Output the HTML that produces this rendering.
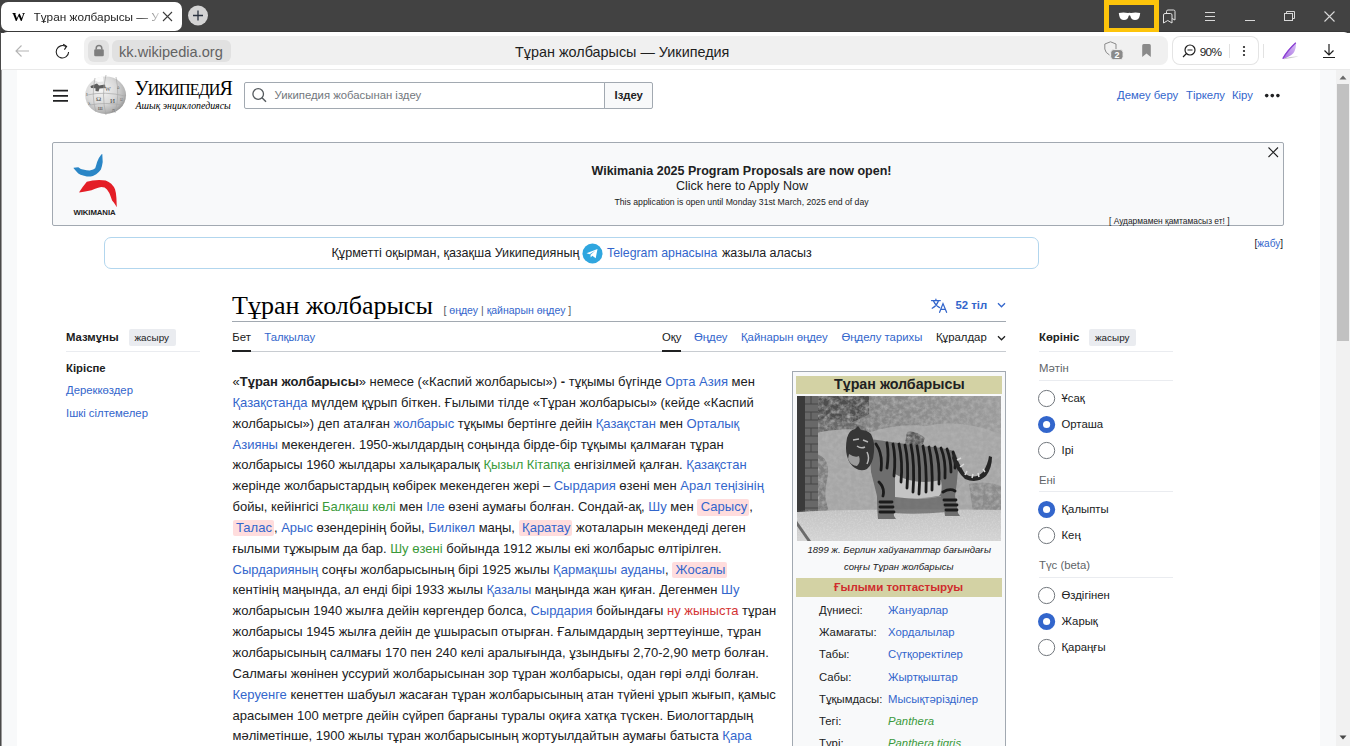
<!DOCTYPE html>
<html><head><meta charset="utf-8"><title>Тұран жолбарысы — Уикипедия</title>
<style>
html,body{margin:0;padding:0;width:1350px;height:746px;overflow:hidden;background:#fff;}
body{position:relative;font-family:"Liberation Sans",sans-serif;}
.r{position:absolute;display:block;}
.t{position:absolute;white-space:nowrap;}
.a{color:#3366cc;}
.g{color:#3a9a3a;}
.rd{color:#d33333;}
.pk{color:#3366cc;background:#fdd;border-radius:2px;padding:0 2px 1.5px 3.5px;}
b{font-weight:bold;}
</style></head><body>
<div class="r" style="left:0px;top:0px;width:1350px;height:33px;background:#424242;"></div><div class="r" style="left:0px;top:31px;width:1350px;height:1px;background:#393939;"></div><div class="r" style="left:1px;top:2px;width:181px;height:29px;background:#ffffff;border-radius:7px;"></div><div class="t" style="left:12.2px;top:10.39px;font-size:12.6px;line-height:15.12px;color:#000;font-weight:bold;font-style:normal;font-family:'Liberation Serif', serif;display:inline-block;transform:scaleX(1.05);transform-origin:0 0;">W</div><div class="t" style="left:33.5px;top:8px;width:125px;height:19px;overflow:hidden;font-size:11.8px;line-height:19px;color:#1e1e1e;white-space:nowrap;-webkit-mask-image:linear-gradient(90deg,#000 0,#000 86%,rgba(0,0,0,0.2) 100%);">Тұран жолбарысы — Уикипедия</div><svg class="r" style="left:162px;top:11px;" width="11" height="11" viewBox="0 0 11 11"><path d="M1 1L10 10M10 1L1 10" stroke="#3c3c3c" stroke-width="1.1"/></svg><svg class="r" style="left:187px;top:5px;" width="22" height="22" viewBox="0 0 22 22"><circle cx="11" cy="10.5" r="10" fill="#d4d4d4"/><path d="M11 5.5v10M6 10.5h10" stroke="#2a3340" stroke-width="1.3"/></svg><div class="r" style="left:1104px;top:0px;width:55px;height:32px;background:#fdc40b;"></div><div class="r" style="left:1109px;top:5px;width:45px;height:22.5px;background:#424242;"></div><svg class="r" style="left:1118px;top:11px;" width="23" height="10" viewBox="0 0 23 10"><path d="M0.8 2Q5.5 0.8 10 2Q11.5 1.4 13 2Q17.5 0.8 22.2 2L21.8 4.5Q21 9 17 9Q13 9 12.3 4.8Q11.5 3.6 10.7 4.8Q10 9 6 9Q2 9 1.2 4.5Z" fill="#fff"/></svg><svg class="r" style="left:1162px;top:9px;" width="15" height="16" viewBox="0 0 15 16"><path d="M4.5 4.5V2.5Q4.5 1 6 1H11.5Q13 1 13 2.5V11L10 9.5" fill="none" stroke="#e2e2e2" stroke-width="1"/><path d="M1.5 14V6Q1.5 4.5 3 4.5H8.5Q10 4.5 10 6V14L5.75 11.5Z" fill="none" stroke="#e2e2e2" stroke-width="1"/></svg><svg class="r" style="left:1204px;top:11px;" width="12" height="11" viewBox="0 0 12 11"><path d="M1 1.5H11M1 5.5H11M1 9.5H11" stroke="#d8d8d8" stroke-width="1.1"/></svg><div class="r" style="left:1245px;top:20px;width:10px;height:1px;background:#d8d8d8;"></div><svg class="r" style="left:1283px;top:10px;" width="13" height="12" viewBox="0 0 13 12"><path d="M3.5 3.5V1.5H11.5V8.5H9.5" fill="none" stroke="#d8d8d8" stroke-width="1"/><rect x="1.5" y="3.5" width="8" height="7" fill="none" stroke="#d8d8d8" stroke-width="1"/></svg><svg class="r" style="left:1324px;top:11px;" width="11" height="11" viewBox="0 0 11 11"><path d="M0.5 0.5L10.5 10.5M10.5 0.5L0.5 10.5" stroke="#d8d8d8" stroke-width="1.1"/></svg><div class="r" style="left:1px;top:32px;width:1349px;height:37px;background:#ffffff;border-radius:6px 6px 0 0;"></div><div class="r" style="left:1px;top:69px;width:1349px;height:1px;background:#e9e9e9;"></div><svg class="r" style="left:14px;top:43px;" width="16" height="16" viewBox="0 0 16 16"><path d="M2 8H15M7.5 2.5L2 8L7.5 13.5" fill="none" stroke="#b4b4b4" stroke-width="1.1"/></svg><svg class="r" style="left:54px;top:42px;" width="18" height="18" viewBox="0 0 18 18"><path d="M14.6 10A6.2 6.2 0 1 1 11.8 4.6" fill="none" stroke="#1e1e1e" stroke-width="1.1"/><path d="M9.2 2.2L12.6 4.4L10.4 7.6" fill="none" stroke="#1e1e1e" stroke-width="1.1"/></svg><div class="r" style="left:84px;top:36px;width:1084px;height:29px;background:#f0f0f0;border-radius:8px;"></div><div class="r" style="left:88px;top:40px;width:21px;height:22px;background:#e1e1e1;border-radius:6px;"></div><svg class="r" style="left:92px;top:44px;" width="14" height="14" viewBox="0 0 14 14"><path d="M4.2 5.5V4.2A2.8 2.8 0 0 1 9.8 4.2V5.5" fill="none" stroke="#7e7e7e" stroke-width="1.5"/><rect x="2.2" y="5.3" width="9.6" height="7" rx="1.3" fill="#7e7e7e"/></svg><div class="r" style="left:112px;top:40px;width:119px;height:22px;background:#e1e1e1;border-radius:6px;"></div><div class="t" style="left:119px;top:43.88px;font-size:14.6px;line-height:17.52px;color:#636363;font-weight:normal;font-style:normal;font-family:'Liberation Sans', sans-serif;">kk.wikipedia.org</div><div class="t" style="left:515px;top:44.07px;font-size:14.4px;line-height:17.28px;color:#1e1e1e;font-weight:normal;font-style:normal;font-family:'Liberation Sans', sans-serif;">Тұран жолбарысы — Уикипедия</div><svg class="r" style="left:1103px;top:40px;" width="22" height="21" viewBox="0 0 22 21"><path d="M7.5 1.8L13 4V9.5M7.5 1.8L1.8 4V9Q2.3 12.8 6.5 15" fill="none" stroke="#8a8a8a" stroke-width="1"/><rect x="7.7" y="9.6" width="12.4" height="10.1" rx="3" fill="#8a8a8a" stroke="#f0f0f0" stroke-width="1"/><text x="13.9" y="18.3" font-size="9" font-family="Liberation Sans" font-weight="bold" fill="#fff" text-anchor="middle">2</text></svg><svg class="r" style="left:1141px;top:43px;" width="12" height="15" viewBox="0 0 12 15"><path d="M1.2 2.5Q1.2 1 2.7 1H8.3Q9.8 1 9.8 2.5V14L5.5 10.6L1.2 14Z" fill="#8a8a8a"/></svg><div class="r" style="left:1172px;top:36px;width:87px;height:29px;background:#ffffff;border-radius:8px;box-shadow:inset 0 0 0 1px #e4e4e4;"></div><svg class="r" style="left:1181px;top:44px;" width="16" height="14" viewBox="0 0 16 14"><circle cx="9" cy="6" r="5" fill="none" stroke="#1e1e1e" stroke-width="1.2"/><path d="M6.5 6H11.5M5.5 9.5L2 13" stroke="#1e1e1e" stroke-width="1.2"/></svg><div class="t" style="left:1199.8px;top:44.83px;font-size:11.8px;line-height:14.16px;color:#1e1e1e;font-weight:normal;font-style:normal;font-family:'Liberation Sans', sans-serif;letter-spacing:-0.75px;">90%</div><div class="r" style="left:1229px;top:44px;width:1px;height:14px;background:#e2e2e2;"></div><svg class="r" style="left:1241px;top:45px;" width="6" height="12" viewBox="0 0 6 12"><circle cx="3" cy="2" r="1.1" fill="#1e1e1e"/><circle cx="3" cy="6" r="1.1" fill="#1e1e1e"/><circle cx="3" cy="10" r="1.1" fill="#1e1e1e"/></svg><div class="r" style="left:1263px;top:44px;width:1px;height:14px;background:#e2e2e2;"></div><svg class="r" style="left:1281px;top:41px;" width="19" height="19" viewBox="0 0 19 19"><defs><linearGradient id="fg" x1="0" y1="1" x2="1" y2="0"><stop offset="0" stop-color="#a467e0"/><stop offset="1" stop-color="#d9c2f5"/></linearGradient></defs><path d="M3 17.6Q10 15.2 17.5 15.6Q10 17.3 3 18.2Z" fill="#c9c9c9"/><path d="M1.5 18Q5 9.5 15 1.5Q15.2 8 12.5 12Q8.5 16.2 1.5 18Z" fill="url(#fg)"/><path d="M1.8 17.6Q6.5 9.5 14.8 1.8" fill="none" stroke="#8a3fd2" stroke-width="1.3"/></svg><svg class="r" style="left:1322px;top:43px;" width="14" height="16" viewBox="0 0 14 16"><path d="M7 1V12M2.5 7.5L7 12L11.5 7.5M1 14.5H13" fill="none" stroke="#1e1e1e" stroke-width="1.2"/></svg><div class="r" style="left:0px;top:32px;width:1px;height:714px;background:#4a4a4a;"></div><div class="r" style="left:1px;top:70px;width:1px;height:676px;background:#9a9a9a;"></div><div class="r" style="left:2px;top:70px;width:15px;height:676px;background:#f8f9fa;"></div><div class="r" style="left:1320px;top:70px;width:16px;height:676px;background:#f8f9fa;"></div><div class="r" style="left:1336px;top:70px;width:14px;height:676px;background:#f1f1f1;"></div><div class="r" style="left:1337px;top:84px;width:12px;height:257px;background:#c1c1c1;"></div><svg class="r" style="left:1338px;top:73px;" width="10" height="8" viewBox="0 0 10 8"><path d="M1.5 6.5L5 2.5L8.5 6.5Z" fill="#6a6a6a"/></svg><svg class="r" style="left:1338px;top:734px;" width="10" height="8" viewBox="0 0 10 8"><path d="M1.5 1.5L5 5.5L8.5 1.5Z" fill="#474747"/></svg>
<svg class="r" style="left:53px;top:88px;" width="16" height="14" viewBox="0 0 16 14"><path d="M0 2.7H15M0 7.9H15M0 12.8H15" stroke="#202122" stroke-width="1.8"/></svg><svg class="r" style="left:84px;top:74px;" width="44" height="42" viewBox="0 0 44 42"><defs><radialGradient id="gg" cx="0.38" cy="0.36" r="0.7"><stop offset="0" stop-color="#f6f6f6"/><stop offset="0.55" stop-color="#d9d9d9"/><stop offset="0.85" stop-color="#b4b4b4"/><stop offset="1" stop-color="#8e8e8e"/></radialGradient></defs><ellipse cx="21.6" cy="21.2" rx="20.4" ry="18.8" fill="url(#gg)"/><path d="M9 5.5Q14 3 19 2.3L19.5 7.5L14 8Z" fill="#fff" opacity="0.9"/><path d="M6.5 12L13 9.5L15 11.5L21 10.5L21.5 14L15.5 14.5L14.5 17.5L11.5 17L11.5 14.2L7 14Z" fill="#5e5e5e"/><path d="M3 21Q21 17 41 22M6 31Q21 28 39 31M22 1Q17 21 22 41M11 4Q7 22 12 38M32 3Q36 21 31 39" fill="none" stroke="#a9a9a9" stroke-width="0.7"/><text x="12" y="27" font-size="7" font-family='Liberation Serif' fill="#4a4a4a">Ω</text><text x="21" y="17" font-size="6" font-family='Liberation Serif' fill="#555">W</text><text x="26" y="29" font-size="7" font-family='Liberation Serif' fill="#4a4a4a">И</text><text x="14" y="36" font-size="6" font-family='Liberation Serif' fill="#555">ш</text><text x="33" y="15" font-size="5" font-family='Liberation Serif' fill="#666">ა</text><text x="2" y="22" font-size="5" font-family='Liberation Serif' fill="#666">I</text><text x="28" y="38" font-size="5" font-family='Liberation Serif' fill="#666">ה</text><text x="36" y="27" font-size="5" font-family='Liberation Serif' fill="#777">ע</text><text x="4" y="31" font-size="5" font-family='Liberation Serif' fill="#666">λ</text></svg><div class="t" style="left:134.5px;top:77.5px;font-family:'Liberation Serif',serif;font-size:16px;line-height:20px;color:#000;letter-spacing:-0.85px;"><span style="font-size:20px">У</span>ИКИПЕДИ<span style="font-size:20px">Я</span></div><div class="t" style="left:135.5px;top:100.22px;font-size:9.9px;line-height:11.88px;color:#000;font-weight:normal;font-style:italic;font-family:'Liberation Serif', serif;">Ашық энциклопедиясы</div><div class="r" style="left:244px;top:82px;width:408px;height:27px;background:#fff;box-sizing:border-box;border:1px solid #a2a9b1;border-radius:2px;"></div><div class="r" style="left:604px;top:82px;width:48.5px;height:27px;background:#f8f9fa;box-sizing:border-box;border:1px solid #a2a9b1;border-radius:0 2px 2px 0;"></div><svg class="r" style="left:251px;top:87px;" width="16" height="17" viewBox="0 0 16 17"><circle cx="7.2" cy="7" r="5.3" fill="none" stroke="#54595d" stroke-width="1.3"/><path d="M11 10.8L15 14.8" stroke="#54595d" stroke-width="1.5"/></svg><div class="t" style="left:274.5px;top:88.97px;font-size:11.34px;line-height:13.61px;color:#72777d;font-weight:normal;font-style:normal;font-family:'Liberation Sans', sans-serif;">Уикипедия жобасынан іздеу</div><div class="t" style="left:614.5px;top:88.97px;font-size:11.34px;line-height:13.61px;color:#202122;font-weight:bold;font-style:normal;font-family:'Liberation Sans', sans-serif;">Іздеу</div><div class="t" style="left:1117px;top:88.67px;font-size:11.34px;line-height:13.61px;color:#3366cc;font-weight:normal;font-style:normal;font-family:'Liberation Sans', sans-serif;">Демеу беру</div><div class="t" style="left:1186px;top:88.67px;font-size:11.34px;line-height:13.61px;color:#3366cc;font-weight:normal;font-style:normal;font-family:'Liberation Sans', sans-serif;">Тіркелу</div><div class="t" style="left:1232px;top:88.67px;font-size:11.34px;line-height:13.61px;color:#3366cc;font-weight:normal;font-style:normal;font-family:'Liberation Sans', sans-serif;">Кіру</div><svg class="r" style="left:1264px;top:92px;" width="17" height="7" viewBox="0 0 17 7"><circle cx="2.7" cy="3.6" r="1.8" fill="#202122"/><circle cx="8.3" cy="3.6" r="1.8" fill="#202122"/><circle cx="13.9" cy="3.6" r="1.8" fill="#202122"/></svg><div class="r" style="left:52px;top:142px;width:1232px;height:84px;background:#f8f9fa;box-sizing:border-box;border:1px solid #a2a9b1;border-radius:2px;"></div><svg class="r" style="left:70px;top:150px;" width="50" height="60" viewBox="0 0 50 60"><path d="M3.6 17.7L8.3 17.2Q11 19.3 13 19.6Q17 20.5 19.6 20.5Q24 19.5 25.2 18.2Q26.5 14.5 27.1 12.1Q28.5 8 31.3 4.6L32.3 4.1L32.7 12Q32 17 30.9 19.6Q28.5 23 26.2 24.3Q22 26.8 20.5 26.6Q16.5 26.5 14 25.7Q10 24.5 8.3 23.4Q5.5 20.5 3.6 18.2Z" fill="#2a86c6"/><path d="M9.3 42.1Q12 37.5 16.8 31.8Q21 30.5 22.4 30.4Q26 29.9 29 29.9Q33 30 35.6 30.4Q39 31.5 41.2 33.7Q44 36.5 45 39.3Q46.2 43 46.4 47.8L46.8 57.2Q43.5 52 42.1 50.6Q40.5 46 39.3 43.1Q37 38.5 34.6 37.4Q31 36.8 29 37.4Q25 38.5 21.5 40.3Q15 41.5 9.3 42.6Z" fill="#e41e26"/></svg><div class="t" style="left:73.5px;top:207.82px;font-size:7.8px;line-height:9.36px;color:#222;font-weight:bold;font-style:normal;font-family:'Liberation Sans', sans-serif;letter-spacing:-0.1px;">WIKIMANIA</div><div class="t" style="left:591.5px;top:164.37px;font-size:12.5px;line-height:15.0px;color:#202122;font-weight:bold;font-style:normal;font-family:'Liberation Sans', sans-serif;">Wikimania 2025 Program Proposals are now open!</div><div class="t" style="left:676px;top:178.87px;font-size:12.5px;line-height:15.0px;color:#202122;font-weight:normal;font-style:normal;font-family:'Liberation Sans', sans-serif;">Click here to Apply Now</div><div class="t" style="left:614.5px;top:196.50px;font-size:8.67px;line-height:10.4px;color:#202122;font-weight:normal;font-style:normal;font-family:'Liberation Sans', sans-serif;">This application is open until Monday 31st March, 2025 end of day</div><svg class="r" style="left:1267px;top:146px;" width="12" height="12" viewBox="0 0 12 12"><path d="M1.5 1.5L11 11M11 1.5L1.5 11" stroke="#202122" stroke-width="1.1"/></svg><div class="t" style="left:1109px;top:215.95px;font-size:8.4px;line-height:10.08px;color:#202122;font-weight:normal;font-style:normal;font-family:'Liberation Sans', sans-serif;">[ Аудармамен қамтамасыз ет! ]</div><div class="t" style="left:1254.5px;top:237.64px;font-size:10.1px;line-height:12.12px;color:#202122;font-weight:normal;font-style:normal;font-family:'Liberation Sans', sans-serif;">[<span style="color:#3366cc">жабу</span>]</div><div class="r" style="left:104px;top:237px;width:934.5px;height:32px;background:#fff;box-sizing:border-box;border:1px solid #b2d6ee;border-radius:7px;"></div><div class="t" style="left:331.5px;top:246.27px;font-size:12.6px;line-height:15.12px;color:#202122;font-weight:normal;font-style:normal;font-family:'Liberation Sans', sans-serif;">Құрметті оқырман, қазақша Уикипедияның</div><svg class="r" style="left:581.5px;top:242.5px;" width="21" height="21" viewBox="0 0 21 21"><circle cx="10.5" cy="10.5" r="10" fill="#2fa6df"/><path d="M4.5 10.3L15.5 6L13.7 15.2L10.3 12.8L8.7 14.5L8.5 11.8L13.5 7.6L7.6 11.3Z" fill="#fff"/></svg><div class="t" style="left:607px;top:245.71px;font-size:12.35px;line-height:14.82px;color:#3366cc;font-weight:normal;font-style:normal;font-family:'Liberation Sans', sans-serif;">Telegram арнасына</div><div class="t" style="left:722px;top:246.37px;font-size:12.5px;line-height:15.0px;color:#202122;font-weight:normal;font-style:normal;font-family:'Liberation Sans', sans-serif;">жазыла аласыз</div><div class="t" style="left:232px;top:290.02px;font-size:26px;line-height:31.2px;color:#000;font-weight:normal;font-style:normal;font-family:'Liberation Serif', serif;">Тұран жолбарысы</div><div class="t" style="left:443.5px;top:303.76px;font-size:10.5px;line-height:12.6px;color:#54595d;font-weight:normal;font-style:normal;font-family:'Liberation Sans', sans-serif;">[ <span style="color:#3366cc">өңдеу</span> | <span style="color:#3366cc">қайнарын өңдеу</span> ]</div><svg class="r" style="left:930px;top:297px;" width="18" height="17" viewBox="0 0 18 17"><g fill="none" stroke="#3366cc" stroke-width="1.25" stroke-linecap="round"><path d="M1.5 3.6H10.3M5.9 2.2V3.6M8.3 4.2Q6.5 9 2.2 11.3M3.6 4.2Q5.8 8.8 9.6 10.6M9.6 15.3L13 6.6L16.6 15.3M10.8 12.4H15.4"/></g></svg><div class="t" style="left:955.5px;top:298.97px;font-size:11.34px;line-height:13.61px;color:#3366cc;font-weight:bold;font-style:normal;font-family:'Liberation Sans', sans-serif;">52 тіл</div><svg class="r" style="left:996px;top:301px;" width="10" height="8" viewBox="0 0 10 8"><path d="M2 2.2L5.5 5.8L9 2.2" fill="none" stroke="#3366cc" stroke-width="1.3"/></svg><div class="r" style="left:232px;top:321px;width:774px;height:1px;background:#a2a9b1;"></div><div class="t" style="left:232.3px;top:331.27px;font-size:11.34px;line-height:13.61px;color:#202122;font-weight:normal;font-style:normal;font-family:'Liberation Sans', sans-serif;">Бет</div><div class="t" style="left:264.3px;top:331.27px;font-size:11.34px;line-height:13.61px;color:#3366cc;font-weight:normal;font-style:normal;font-family:'Liberation Sans', sans-serif;">Талқылау</div><div class="t" style="left:662px;top:331.27px;font-size:11.34px;line-height:13.61px;color:#202122;font-weight:normal;font-style:normal;font-family:'Liberation Sans', sans-serif;">Оқу</div><div class="t" style="left:694px;top:331.27px;font-size:11.34px;line-height:13.61px;color:#3366cc;font-weight:normal;font-style:normal;font-family:'Liberation Sans', sans-serif;">Өңдеу</div><div class="t" style="left:741px;top:331.27px;font-size:11.34px;line-height:13.61px;color:#3366cc;font-weight:normal;font-style:normal;font-family:'Liberation Sans', sans-serif;">Қайнарын өңдеу</div><div class="t" style="left:841.5px;top:331.27px;font-size:11.34px;line-height:13.61px;color:#3366cc;font-weight:normal;font-style:normal;font-family:'Liberation Sans', sans-serif;">Өңделу тарихы</div><div class="t" style="left:936px;top:331.27px;font-size:11.34px;line-height:13.61px;color:#202122;font-weight:normal;font-style:normal;font-family:'Liberation Sans', sans-serif;">Құралдар</div><svg class="r" style="left:996px;top:334px;" width="10" height="8" viewBox="0 0 10 8"><path d="M2 2.2L5.5 5.8L9 2.2" fill="none" stroke="#202122" stroke-width="1.3"/></svg><div class="r" style="left:232px;top:351px;width:774px;height:1px;background:#c8ccd1;"></div><div class="r" style="left:232px;top:349.5px;width:19px;height:2px;background:#202122;"></div><div class="r" style="left:662px;top:349.5px;width:19px;height:2px;background:#202122;"></div><div class="t" style="left:66px;top:330.97px;font-size:11.34px;line-height:13.61px;color:#202122;font-weight:bold;font-style:normal;font-family:'Liberation Sans', sans-serif;">Мазмұны</div><div class="r" style="left:128.5px;top:328.5px;width:47px;height:17.5px;background:#eaecf0;border-radius:2px;"></div><div class="t" style="left:134.5px;top:331.83px;font-size:9.9px;line-height:11.88px;color:#202122;font-weight:normal;font-style:normal;font-family:'Liberation Sans', sans-serif;">жасыру</div><div class="r" style="left:66px;top:351px;width:134px;height:1px;background:#eaecf0;"></div><div class="t" style="left:66px;top:361.77px;font-size:11.34px;line-height:13.61px;color:#202122;font-weight:bold;font-style:normal;font-family:'Liberation Sans', sans-serif;">Кіріспе</div><div class="t" style="left:66px;top:384.07px;font-size:11.34px;line-height:13.61px;color:#3366cc;font-weight:normal;font-style:normal;font-family:'Liberation Sans', sans-serif;">Дереккөздер</div><div class="t" style="left:66px;top:407.47px;font-size:11.34px;line-height:13.61px;color:#3366cc;font-weight:normal;font-style:normal;font-family:'Liberation Sans', sans-serif;">Ішкі сілтемелер</div><div class="t" style="left:1039px;top:330.77px;font-size:11.34px;line-height:13.61px;color:#202122;font-weight:bold;font-style:normal;font-family:'Liberation Sans', sans-serif;">Көрініс</div><div class="r" style="left:1089px;top:328.5px;width:47px;height:17.5px;background:#eaecf0;border-radius:2px;"></div><div class="t" style="left:1095px;top:331.83px;font-size:9.9px;line-height:11.88px;color:#202122;font-weight:normal;font-style:normal;font-family:'Liberation Sans', sans-serif;">жасыру</div><div class="r" style="left:1039px;top:351px;width:134px;height:1px;background:#eaecf0;"></div><div class="t" style="left:1039px;top:361.97px;font-size:11.34px;line-height:13.61px;color:#606468;font-weight:normal;font-style:normal;font-family:'Liberation Sans', sans-serif;">Мәтін</div><div class="r" style="left:1039px;top:380px;width:134px;height:1px;background:#eaecf0;"></div><svg class="r" style="left:1037px;top:388.8px;" width="19" height="19" viewBox="0 0 19 19"><circle cx="9.6" cy="9.5" r="8.1" fill="#fff" stroke="#72777d" stroke-width="1"/></svg><div class="t" style="left:1061.5px;top:392.07px;font-size:11.34px;line-height:13.61px;color:#202122;font-weight:normal;font-style:normal;font-family:'Liberation Sans', sans-serif;">Ұсақ</div><svg class="r" style="left:1037px;top:414.8px;" width="19" height="19" viewBox="0 0 19 19"><circle cx="9.6" cy="9.5" r="6.1" fill="#fff" stroke="#3366cc" stroke-width="5"/></svg><div class="t" style="left:1061.5px;top:418.07px;font-size:11.34px;line-height:13.61px;color:#202122;font-weight:normal;font-style:normal;font-family:'Liberation Sans', sans-serif;">Орташа</div><svg class="r" style="left:1037px;top:440.8px;" width="19" height="19" viewBox="0 0 19 19"><circle cx="9.6" cy="9.5" r="8.1" fill="#fff" stroke="#72777d" stroke-width="1"/></svg><div class="t" style="left:1061.5px;top:444.07px;font-size:11.34px;line-height:13.61px;color:#202122;font-weight:normal;font-style:normal;font-family:'Liberation Sans', sans-serif;">Ірі</div><div class="t" style="left:1039px;top:473.97px;font-size:11.34px;line-height:13.61px;color:#606468;font-weight:normal;font-style:normal;font-family:'Liberation Sans', sans-serif;">Ені</div><div class="r" style="left:1039px;top:491px;width:134px;height:1px;background:#eaecf0;"></div><svg class="r" style="left:1037px;top:500.2px;" width="19" height="19" viewBox="0 0 19 19"><circle cx="9.6" cy="9.5" r="6.1" fill="#fff" stroke="#3366cc" stroke-width="5"/></svg><div class="t" style="left:1061.5px;top:503.47px;font-size:11.34px;line-height:13.61px;color:#202122;font-weight:normal;font-style:normal;font-family:'Liberation Sans', sans-serif;">Қалыпты</div><svg class="r" style="left:1037px;top:526.2px;" width="19" height="19" viewBox="0 0 19 19"><circle cx="9.6" cy="9.5" r="8.1" fill="#fff" stroke="#72777d" stroke-width="1"/></svg><div class="t" style="left:1061.5px;top:529.47px;font-size:11.34px;line-height:13.61px;color:#202122;font-weight:normal;font-style:normal;font-family:'Liberation Sans', sans-serif;">Кең</div><div class="t" style="left:1039px;top:559.17px;font-size:11.34px;line-height:13.61px;color:#606468;font-weight:normal;font-style:normal;font-family:'Liberation Sans', sans-serif;">Түс (beta)</div><div class="r" style="left:1039px;top:577px;width:134px;height:1px;background:#eaecf0;"></div><svg class="r" style="left:1037px;top:586.0px;" width="19" height="19" viewBox="0 0 19 19"><circle cx="9.6" cy="9.5" r="8.1" fill="#fff" stroke="#72777d" stroke-width="1"/></svg><div class="t" style="left:1061.5px;top:589.27px;font-size:11.34px;line-height:13.61px;color:#202122;font-weight:normal;font-style:normal;font-family:'Liberation Sans', sans-serif;">Өздігінен</div><svg class="r" style="left:1037px;top:612.0px;" width="19" height="19" viewBox="0 0 19 19"><circle cx="9.6" cy="9.5" r="6.1" fill="#fff" stroke="#3366cc" stroke-width="5"/></svg><div class="t" style="left:1061.5px;top:615.27px;font-size:11.34px;line-height:13.61px;color:#202122;font-weight:normal;font-style:normal;font-family:'Liberation Sans', sans-serif;">Жарық</div><svg class="r" style="left:1037px;top:638.0px;" width="19" height="19" viewBox="0 0 19 19"><circle cx="9.6" cy="9.5" r="8.1" fill="#fff" stroke="#72777d" stroke-width="1"/></svg><div class="t" style="left:1061.5px;top:641.27px;font-size:11.34px;line-height:13.61px;color:#202122;font-weight:normal;font-style:normal;font-family:'Liberation Sans', sans-serif;">Қараңғы</div><div class="t" style="left:232.5px;top:374.00px;font-size:13px;line-height:15.6px;color:#202122;font-weight:normal;font-style:normal;font-family:'Liberation Sans', sans-serif;">«<b>Тұран жолбарысы</b>» немесе («Каспий жолбарысы») <b>-</b> тұқымы бүгінде <span class="a">Орта Азия</span> мен</div><div class="t" style="left:232.5px;top:394.84px;font-size:13px;line-height:15.6px;color:#202122;font-weight:normal;font-style:normal;font-family:'Liberation Sans', sans-serif;"><span class="a">Қазақстанда</span> мүлдем құрып біткен. Ғылыми тілде «Тұран жолбарысы» (кейде «Каспий</div><div class="t" style="left:232.5px;top:415.69px;font-size:13px;line-height:15.6px;color:#202122;font-weight:normal;font-style:normal;font-family:'Liberation Sans', sans-serif;">жолбарысы») деп аталған <span class="a">жолбарыс</span> тұқымы бертінге дейін <span class="a">Қазақстан</span> мен <span class="a">Орталық</span></div><div class="t" style="left:232.5px;top:436.53px;font-size:13px;line-height:15.6px;color:#202122;font-weight:normal;font-style:normal;font-family:'Liberation Sans', sans-serif;"><span class="a">Азияны</span> мекендеген. 1950-жылдардың соңында бірде-бір тұқымы қалмаған тұран</div><div class="t" style="left:232.5px;top:457.38px;font-size:13px;line-height:15.6px;color:#202122;font-weight:normal;font-style:normal;font-family:'Liberation Sans', sans-serif;">жолбарысы 1960 жылдары халықаралық <span class="g">Қызыл Кітапқа</span> енгізілмей қалған. <span class="a">Қазақстан</span></div><div class="t" style="left:232.5px;top:478.22px;font-size:13px;line-height:15.6px;color:#202122;font-weight:normal;font-style:normal;font-family:'Liberation Sans', sans-serif;">жерінде жолбарыстардың көбірек мекендеген жері – <span class="a">Сырдария</span> өзені мен <span class="a">Арал теңізінің</span></div><div class="t" style="left:232.5px;top:499.07px;font-size:13px;line-height:15.6px;color:#202122;font-weight:normal;font-style:normal;font-family:'Liberation Sans', sans-serif;">бойы, кейінгісі <span class="g">Балқаш көлі</span> мен <span class="a">Іле</span> өзені аумағы болған. Сондай-ақ, <span class="a">Шу</span> мен <span class="pk">Сарысу</span>,</div><div class="t" style="left:232.5px;top:519.91px;font-size:13px;line-height:15.6px;color:#202122;font-weight:normal;font-style:normal;font-family:'Liberation Sans', sans-serif;"><span class="pk">Талас</span>, <span class="a">Арыс</span> өзендерінің бойы, <span class="a">Билікөл</span> маңы, <span class="pk">Қаратау</span> жоталарын мекендеді деген</div><div class="t" style="left:232.5px;top:540.76px;font-size:13px;line-height:15.6px;color:#202122;font-weight:normal;font-style:normal;font-family:'Liberation Sans', sans-serif;">ғылыми тұжырым да бар. <span class="g">Шу өзені</span> бойында 1912 жылы екі жолбарыс өлтірілген.</div><div class="t" style="left:232.5px;top:561.60px;font-size:13px;line-height:15.6px;color:#202122;font-weight:normal;font-style:normal;font-family:'Liberation Sans', sans-serif;"><span class="a">Сырдарияның</span> соңғы жолбарысының бірі 1925 жылы <span class="a">Қармақшы ауданы</span>, <span class="pk">Жосалы</span></div><div class="t" style="left:232.5px;top:582.45px;font-size:13px;line-height:15.6px;color:#202122;font-weight:normal;font-style:normal;font-family:'Liberation Sans', sans-serif;">кентінің маңында, ал енді бірі 1933 жылы <span class="a">Қазалы</span> маңында жан қиған. Дегенмен <span class="a">Шу</span></div><div class="t" style="left:232.5px;top:603.29px;font-size:13px;line-height:15.6px;color:#202122;font-weight:normal;font-style:normal;font-family:'Liberation Sans', sans-serif;">жолбарысын 1940 жылға дейін көргендер болса, <span class="a">Сырдария</span> бойындағы <span class="rd">ну жыныста</span> тұран</div><div class="t" style="left:232.5px;top:624.14px;font-size:13px;line-height:15.6px;color:#202122;font-weight:normal;font-style:normal;font-family:'Liberation Sans', sans-serif;">жолбарысы 1945 жылға дейін де ұшырасып отырған. Ғалымдардың зерттеуінше, тұран</div><div class="t" style="left:232.5px;top:644.98px;font-size:13px;line-height:15.6px;color:#202122;font-weight:normal;font-style:normal;font-family:'Liberation Sans', sans-serif;">жолбарысының салмағы 170 пен 240 келі аралығында, ұзындығы 2,70-2,90 метр болған.</div><div class="t" style="left:232.5px;top:665.83px;font-size:13px;line-height:15.6px;color:#202122;font-weight:normal;font-style:normal;font-family:'Liberation Sans', sans-serif;">Салмағы жөнінен уссурий жолбарысынан зор тұран жолбарысы, одан гөрі әлді болған.</div><div class="t" style="left:232.5px;top:686.67px;font-size:13px;line-height:15.6px;color:#202122;font-weight:normal;font-style:normal;font-family:'Liberation Sans', sans-serif;"><span class="a">Керуенге</span> кенеттен шабуыл жасаған тұран жолбарысының атан түйені ұрып жығып, қамыс</div><div class="t" style="left:232.5px;top:707.52px;font-size:13px;line-height:15.6px;color:#202122;font-weight:normal;font-style:normal;font-family:'Liberation Sans', sans-serif;">арасымен 100 метрге дейін сүйреп барғаны туралы оқиға хатқа түскен. Биологтардың</div><div class="t" style="left:232.5px;top:728.36px;font-size:13px;line-height:15.6px;color:#202122;font-weight:normal;font-style:normal;font-family:'Liberation Sans', sans-serif;">мәліметінше, 1900 жылы тұран жолбарысының жортуылдайтын аумағы батыста <span class="a">Қара</span></div><div class="r" style="left:792px;top:371px;width:214px;height:380px;background:#f8f9fa;box-sizing:border-box;border:1px solid #a2a9b1;"></div><div class="r" style="left:796px;top:376px;width:206px;height:18px;background:#d3d2a4;"></div><div class="t" style="left:834px;top:376.48px;font-size:14.28px;line-height:17.14px;color:#202122;font-weight:bold;font-style:normal;font-family:'Liberation Sans', sans-serif;">Тұран жолбарысы</div><svg class="r" style="left:797px;top:396px;" width="204" height="145" viewBox="0 0 204 145"><defs>
<linearGradient id="flr" x1="0" y1="0" x2="0" y2="1"><stop offset="0" stop-color="#c2c2c2"/><stop offset="1" stop-color="#d4d4d4"/></linearGradient>
<linearGradient id="bgtop" x1="0" y1="0" x2="1" y2="0"><stop offset="0" stop-color="#767676"/><stop offset="1" stop-color="#9c9c9c"/></linearGradient>
<filter id="nz" x="0" y="0" width="100%" height="100%"><feTurbulence type="fractalNoise" baseFrequency="0.22" numOctaves="3" seed="11" result="t"/><feColorMatrix in="t" type="matrix" values="0 0 0 0 0.45  0 0 0 0 0.45  0 0 0 0 0.45  1.6 0 0 0 -0.55"/></filter>
<filter id="nz2" x="0" y="0" width="100%" height="100%"><feTurbulence type="fractalNoise" baseFrequency="0.6" numOctaves="2" seed="4" result="t"/><feColorMatrix in="t" type="matrix" values="0 0 0 0 0.9  0 0 0 0 0.9  0 0 0 0 0.9  1.2 0 0 0 -0.5"/></filter>
</defs>
<rect width="204" height="145" fill="#a2a2a2"/>
<rect x="20" y="0" width="184" height="36" fill="url(#bgtop)"/>
<path d="M20 0H72V18Q60 26 40 30L20 33Z" fill="#4e4e4e"/>
<path d="M20 24Q45 20 74 34L72 40Q45 31 20 37Z" fill="#686868"/>
<path d="M20 37Q50 30 74 36Q100 27 130 30Q160 22 204 38V117H20Z" fill="#a6a6a6"/>
<path d="M110 36Q118 34 128 42L124 54Q115 51 108 47Z" fill="#5a5a5a"/>
<path d="M172 88Q190 84 204 90V116H176Z" fill="#8a8a8a"/>
<path d="M24 60Q34 66 30 84Q26 100 32 116H20V58Z" fill="#7e7e7e"/>
<rect x="20" y="0" width="184" height="117" filter="url(#nz)"/>
<rect x="0" y="0" width="8" height="118" fill="#3a3a3a"/>
<rect x="8" y="0" width="13" height="118" fill="#686868"/>
<path d="M8 8H21M8 16H21M8 24H21M8 32H21M8 40H21M8 48H21M8 56H21M8 64H21M8 72H21M8 80H21M8 88H21M8 96H21M8 104H21M8 112H21M14 0V8M14 16V24M14 32V40M14 48V56M14 64V72M14 80V88M14 96V104" stroke="#474747" stroke-width="1"/>
<path d="M0 116Q80 112 204 114V145H0Z" fill="url(#flr)"/>
<rect x="0" y="114" width="204" height="31" filter="url(#nz2)" opacity="0.5"/>
<path d="M0 125L14 145H10.5L0 130Z" fill="#6a6a6a"/>
<path d="M96 100Q120 106 146 100L150 116Q120 119 96 117Z" fill="#606060" opacity="0.7"/>
<path d="M72 43Q95 46 122 50Q146 51 157 55Q162 62 161 74Q160 88 158 100Q160 110 161 117L163 120L148 120Q147 110 144 100Q132 103 120 101Q108 103 98 101Q96 112 97 120L99 123L81 123Q80 112 80 100Q77 88 74 76Z" fill="#6e6e6e"/>
<path d="M98 78Q118 90 144 84Q146 96 142 100Q120 104 98 101Z" fill="#c4c4c4"/>
<g stroke="#1c1c1c" stroke-width="2.8" fill="none" stroke-linecap="round">
<path d="M90 47Q92 58 90 72M96 48Q99 62 97 80M102 48Q106 66 104 86M108 49Q112 66 110 92M114 49Q118 68 116 96M120 50Q124 70 122 98M126 50Q130 68 129 96M132 51Q136 68 135 94M138 51Q143 66 142 88M144 52Q149 64 148 82M150 53Q154 64 154 76M156 56Q159 66 158 72"/>
<path d="M79 48Q86 58 84 74M82 86Q88 92 86 100M83 106H95M83 111H96M83 116H97M147 104H159M148 109H160M149 114H160M146 96Q153 92 158 95"/>
</g>
<path d="M50 42Q52 34 58 33L61 30L64 34Q70 34 74 38Q78 46 77 56Q76 68 70 73Q64 76 58 72Q52 68 50 60Q48 52 50 42Z" fill="#363636"/>
<path d="M52 58Q58 62 62 60Q64 66 60 70Q54 70 51 63Z" fill="#9c9c9c"/>
<path d="M56 44L62 43M66 44L71 46M60 50Q64 53 68 51M70 56Q73 62 70 68" stroke="#b8b8b8" stroke-width="1.5" fill="none"/>
<path d="M157 56Q163 70 168 78Q178 84 186 76Q191 68 192 60L195 61Q195 72 189 80Q180 88 168 83Q160 76 155 62Z" fill="#262626"/>
<path d="M160 64L164 62M163 71L167 68M168 79L170 75M175 82L176 78M182 81L181 77M188 76L186 73" stroke="#dadada" stroke-width="1.5"/></svg><div class="t" style="left:807.5px;top:543.97px;font-size:9.54px;line-height:11.45px;color:#202122;font-weight:normal;font-style:italic;font-family:'Liberation Sans', sans-serif;">1899 ж. Берлин хайуанаттар бағындағы</div><div class="t" style="left:844px;top:561.47px;font-size:9.54px;line-height:11.45px;color:#202122;font-weight:normal;font-style:italic;font-family:'Liberation Sans', sans-serif;">соңғы Тұран жолбарысы</div><div class="r" style="left:796px;top:578px;width:206px;height:18.5px;background:#d3d2a4;"></div><div class="t" style="left:834px;top:581.27px;font-size:11.55px;line-height:13.86px;color:#cf2d2d;font-weight:bold;font-style:normal;font-family:'Liberation Sans', sans-serif;">Ғылыми топтастыруы</div><div class="t" style="left:819px;top:603.97px;font-size:11.34px;line-height:13.61px;color:#202122;font-weight:normal;font-style:normal;font-family:'Liberation Sans', sans-serif;">Дүниесі:</div><div class="t" style="left:888px;top:603.97px;font-size:11.34px;line-height:13.61px;color:#3366cc;font-weight:normal;font-style:normal;font-family:'Liberation Sans', sans-serif;">Жануарлар</div><div class="t" style="left:819px;top:626.17px;font-size:11.34px;line-height:13.61px;color:#202122;font-weight:normal;font-style:normal;font-family:'Liberation Sans', sans-serif;">Жамағаты:</div><div class="t" style="left:888px;top:626.17px;font-size:11.34px;line-height:13.61px;color:#3366cc;font-weight:normal;font-style:normal;font-family:'Liberation Sans', sans-serif;">Хордалылар</div><div class="t" style="left:819px;top:648.37px;font-size:11.34px;line-height:13.61px;color:#202122;font-weight:normal;font-style:normal;font-family:'Liberation Sans', sans-serif;">Табы:</div><div class="t" style="left:888px;top:648.37px;font-size:11.34px;line-height:13.61px;color:#3366cc;font-weight:normal;font-style:normal;font-family:'Liberation Sans', sans-serif;">Сүтқоректілер</div><div class="t" style="left:819px;top:670.57px;font-size:11.34px;line-height:13.61px;color:#202122;font-weight:normal;font-style:normal;font-family:'Liberation Sans', sans-serif;">Сабы:</div><div class="t" style="left:888px;top:670.57px;font-size:11.34px;line-height:13.61px;color:#3366cc;font-weight:normal;font-style:normal;font-family:'Liberation Sans', sans-serif;">Жыртқыштар</div><div class="t" style="left:819px;top:692.77px;font-size:11.34px;line-height:13.61px;color:#202122;font-weight:normal;font-style:normal;font-family:'Liberation Sans', sans-serif;">Тұқымдасы:</div><div class="t" style="left:888px;top:692.77px;font-size:11.34px;line-height:13.61px;color:#3366cc;font-weight:normal;font-style:normal;font-family:'Liberation Sans', sans-serif;">Мысықтәрізділер</div><div class="t" style="left:819px;top:714.97px;font-size:11.34px;line-height:13.61px;color:#202122;font-weight:normal;font-style:normal;font-family:'Liberation Sans', sans-serif;">Тегі:</div><div class="t" style="left:888px;top:714.97px;font-size:11.34px;line-height:13.61px;color:#3a9a3a;font-weight:normal;font-style:italic;font-family:'Liberation Sans', sans-serif;">Panthera</div><div class="t" style="left:819px;top:737.17px;font-size:11.34px;line-height:13.61px;color:#202122;font-weight:normal;font-style:normal;font-family:'Liberation Sans', sans-serif;">Түрі:</div><div class="t" style="left:888px;top:737.17px;font-size:11.34px;line-height:13.61px;color:#3a9a3a;font-weight:normal;font-style:italic;font-family:'Liberation Sans', sans-serif;">Panthera tigris</div>
</body></html>
